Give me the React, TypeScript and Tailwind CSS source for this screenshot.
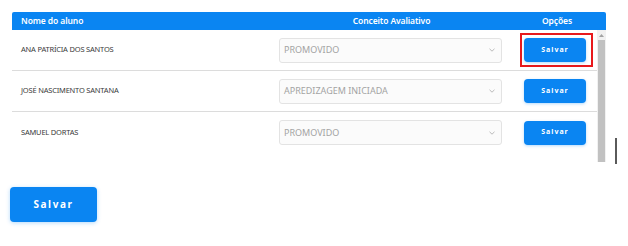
import React from "react";

const rows = [
  { name: "ANA PATRÍCIA DOS SANTOS", value: "PROMOVIDO", highlight: true },
  { name: "JOSÉ NASCIMENTO SANTANA", value: "APREDIZAGEM INICIADA", highlight: false },
  { name: "SAMUEL DORTAS", value: "PROMOVIDO", highlight: false },
];

function Chevron() {
  return (
    <svg width="6" height="4" viewBox="0 0 6 4" className="shrink-0">
      <path d="M0.5 0.8 L3 3.2 L5.5 0.8" fill="none" stroke="#a8a8a8" strokeWidth="0.8" />
    </svg>
  );
}

export default function App() {
  return (
    <div
      className="relative w-[628px] h-[246px] bg-white overflow-hidden"
      style={{ fontFamily: '"Noto Sans", "Open Sans", Arial, sans-serif' }}
    >
      <div className="pt-[12px] pl-[12px]">
        <div className="w-[594px]">
          {/* header */}
          <div className="flex h-[18px] items-center bg-[#0a85f2] rounded-t-[2px] text-white text-[8.5px] font-semibold tracking-[-0.1px]">
            <div className="w-[259px] pl-[9px]">Nome do aluno</div>
            <div className="w-[239px] text-center pl-[2px]">Conceito Avaliativo</div>
            <div className="w-[96px] text-center pr-[6px] pl-[4px]">Opções</div>
          </div>
          {/* body */}
          <div className="flex h-[132px]">
            <div className="w-[585px]">
              {rows.map((r, i) => (
                <div
                  key={i}
                  className={`flex items-center h-[41px] ${i < 2 ? "border-b border-[#dcdcdc]" : ""}`}
                >
                  <div className="w-[259px] pl-[9px] text-[7.5px] text-[#3a3a3a] tracking-[-0.2px]">
                    {r.name}
                  </div>
                  <div className="w-[239px] px-[8px]">
                    <div className="flex items-center justify-between h-[25px] rounded-[3px] border border-[#e3e3e3] bg-[#fbfbfb] pl-[4px] pr-[6px]">
                      <span className="text-[9px] text-[#a3a3a3]">{r.value}</span>
                      <Chevron />
                    </div>
                  </div>
                  <div className="w-[87px] pl-[14px]">
                    <div className="relative">
                      {r.highlight && (
                        <div className="absolute left-[-4px] top-[-5px] w-[73px] h-[34px] border-2 border-[#e8191c]" />
                      )}
                      <button className="relative flex items-center justify-center w-[62px] h-[24px] rounded-[4px] bg-[#0a85f2] text-white text-[7px] font-bold tracking-[1px] shadow-[0_1px_3px_rgba(10,133,242,0.3)]">
                        Salvar
                      </button>
                    </div>
                  </div>
                </div>
              ))}
            </div>
            {/* scrollbar */}
            <div className="w-[9px] flex flex-col bg-[#f1f1f1]">
              <div className="h-[10px] flex items-center justify-center">
                <svg width="5" height="3" viewBox="0 0 5 3">
                  <path d="M0 3 L2.5 0 L5 3 Z" fill="#a3a3a3" />
                </svg>
              </div>
              <div className="flex-1 mx-[1px] bg-[#c1c1c1]" />
            </div>
          </div>
        </div>
      </div>
      {/* bottom button */}
      <div className="pl-[10px] pt-[25px]">
        <button className="flex items-center justify-center w-[87px] h-[35px] rounded-[4px] bg-[#0a85f2] text-white text-[10px] font-bold tracking-[1.6px] shadow-[0_1px_4px_rgba(10,133,242,0.3)]">
          Salvar
        </button>
      </div>
      {/* text cursor */}
      <div className="absolute left-[615px] top-[138px] w-[2px] h-[26px] bg-[#5a5a5a]" />
    </div>
  );
}
